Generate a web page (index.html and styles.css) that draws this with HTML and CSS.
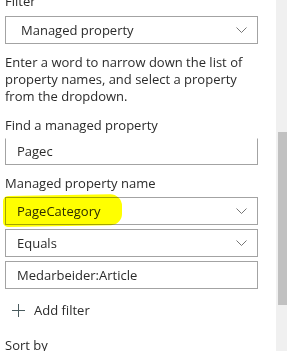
FILE: index.html
```html
<!DOCTYPE html>
<html>
<head>
<meta charset="utf-8">
<link rel="stylesheet" href="styles.css">
</head>
<body>
<div class="page">
  <main class="panel">
    <div class="lbl lbl-first">Filter</div>
    <div class="field dd dd-first">
      <span class="val">Managed property</span>
      <svg class="chev" width="11" height="6" viewBox="0 0 11 6"><path d="M0.5 0.5 L5.5 5.5 L10.5 0.5" fill="none" stroke="#666" stroke-width="0.9"/></svg>
    </div>
    <p class="help">Enter a word to narrow down the list of property names, and select a property from the dropdown.</p>
    <div class="lbl lbl-find">Find a managed property</div>
    <div class="field tb tb-open"><span class="val">Pagec</span></div>
    <div class="lbl lbl-name">Managed property name</div>
    <div class="field dd marked">
      <span class="val">PageCategory</span>
      <svg class="chev" width="11" height="6" viewBox="0 0 11 6"><path d="M0.5 0.5 L5.5 5.5 L10.5 0.5" fill="none" stroke="#666" stroke-width="0.9"/></svg>
      <div class="marker"></div>
    </div>
    <div class="field dd gap">
      <span class="val">Equals</span>
      <svg class="chev" width="11" height="6" viewBox="0 0 11 6"><path d="M0.5 0.5 L5.5 5.5 L10.5 0.5" fill="none" stroke="#666" stroke-width="0.9"/></svg>
    </div>
    <div class="field tb gap"><span class="val">Medarbeider:Article</span></div>
    <div class="add">
      <svg class="plus" width="13" height="13" viewBox="0 0 13 13"><path d="M6.5 0 V13 M0 6.5 H13" stroke="#4a5b5e" stroke-width="1" fill="none"/></svg>
      <span>Add filter</span>
    </div>
    <div class="lbl lbl-sort">Sort by</div>
  </main>
  <div class="scroll"><div class="thumb"></div></div>
</div>
</body>
</html>
```
FILE: styles.css
```css
html, body {
  margin: 0;
  padding: 0;
  background: #fff;
}
body {
  font-family: "Open Sans", "Noto Sans", sans-serif;
  font-size: 13px;
  line-height: 17px;
  color: #2b2b2b;
}
.page {
  display: flex;
  width: 287px;
  height: 351px;
  overflow: hidden;
}
.panel {
  width: 253px;
  padding-left: 5px;
  padding-right: 18px;
  display: flex;
  flex-direction: column;
}
.lbl {
  height: 17px;
  flex: none;
}
.lbl-first {
  margin-top: -7px;
  margin-bottom: 6px;
}
.field {
  position: relative;
  box-sizing: border-box;
  height: 28px;
  flex: none;
  border: 1px solid #a3a3a3;
  display: flex;
  align-items: center;
  padding-left: 11px;
}
.dd-first {
  padding-left: 15px;
}
.val {
  flex: 1;
  white-space: nowrap;
}
.chev {
  margin-right: 10px;
}
.help {
  margin: 10px 0 0 0;
}
.lbl-find {
  margin-top: 12px;
}
.tb-open {
  margin-top: 4px;
  height: 27px;
  border-top-color: transparent;
}
.lbl-name {
  margin-top: 10px;
}
.marked {
  margin-top: 5px;
}
.gap {
  margin-top: 4px;
}
.marker {
  position: absolute;
  left: -3px;
  top: -3px;
  width: 119px;
  height: 31px;
  background: #ffff00;
  border-radius: 5px 12px 11px 5px;
  transform: skewY(-1deg);
  mix-blend-mode: multiply;
  pointer-events: none;
}
.add {
  display: flex;
  align-items: center;
  margin-top: 13px;
  padding-left: 7px;
  height: 17px;
  flex: none;
}
.plus {
  margin-right: 9px;
}
.lbl-sort {
  margin-top: 18px;
}
.scroll {
  width: 11px;
  height: 351px;
  background: #f0f0f0;
  flex: none;
  padding-top: 132px;
  box-sizing: border-box;
}
.thumb {
  margin-left: 2px;
  width: 9px;
  height: 173px;
  background: #c1c1c1;
}
```
